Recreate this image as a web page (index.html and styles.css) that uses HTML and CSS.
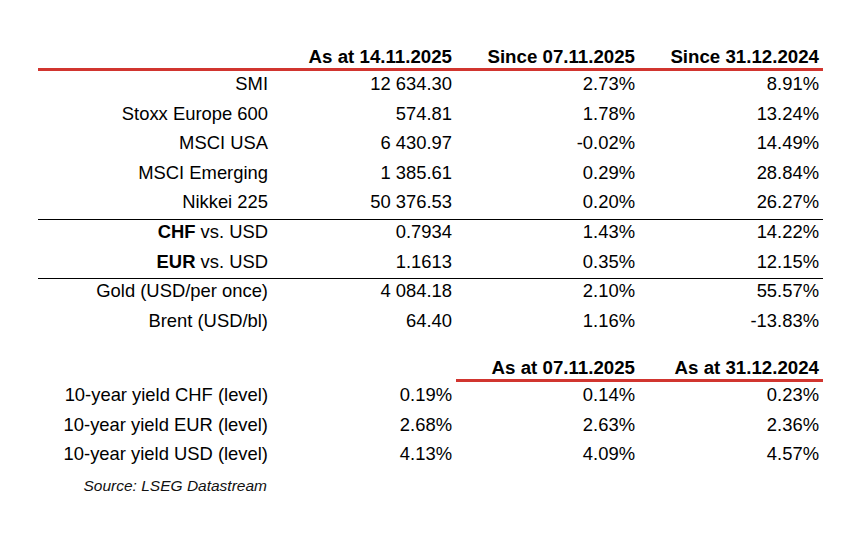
FILE: index.html
```html
<!DOCTYPE html>
<html lang="en">
<head>
<meta charset="utf-8">
<title>Market overview</title>
<link rel="stylesheet" href="styles.css">
</head>
<body>
<main class="sheet">
  <div class="row head">
    <div class="cell"></div>
    <div class="cell">As at 14.11.2025</div>
    <div class="cell">Since 07.11.2025</div>
    <div class="cell">Since 31.12.2024</div>
  </div>
  <div class="row">
    <div class="cell">SMI</div>
    <div class="cell">12 634.30</div>
    <div class="cell">2.73%</div>
    <div class="cell">8.91%</div>
  </div>
  <div class="row">
    <div class="cell">Stoxx Europe 600</div>
    <div class="cell">574.81</div>
    <div class="cell">1.78%</div>
    <div class="cell">13.24%</div>
  </div>
  <div class="row">
    <div class="cell">MSCI USA</div>
    <div class="cell">6 430.97</div>
    <div class="cell">-0.02%</div>
    <div class="cell">14.49%</div>
  </div>
  <div class="row">
    <div class="cell">MSCI Emerging</div>
    <div class="cell">1 385.61</div>
    <div class="cell">0.29%</div>
    <div class="cell">28.84%</div>
  </div>
  <div class="row">
    <div class="cell">Nikkei 225</div>
    <div class="cell">50 376.53</div>
    <div class="cell">0.20%</div>
    <div class="cell">26.27%</div>
  </div>
  <div class="row ruled">
    <div class="cell"><b>CHF</b> vs. USD</div>
    <div class="cell">0.7934</div>
    <div class="cell">1.43%</div>
    <div class="cell">14.22%</div>
  </div>
  <div class="row">
    <div class="cell"><b>EUR</b> vs. USD</div>
    <div class="cell">1.1613</div>
    <div class="cell">0.35%</div>
    <div class="cell">12.15%</div>
  </div>
  <div class="row ruled">
    <div class="cell">Gold (USD/per once)</div>
    <div class="cell">4 084.18</div>
    <div class="cell">2.10%</div>
    <div class="cell">55.57%</div>
  </div>
  <div class="row">
    <div class="cell">Brent (USD/bl)</div>
    <div class="cell">64.40</div>
    <div class="cell">1.16%</div>
    <div class="cell">-13.83%</div>
  </div>

  <div class="row head partial">
    <div class="cell"></div>
    <div class="cell"></div>
    <div class="cell red">As at 07.11.2025</div>
    <div class="cell red">As at 31.12.2024</div>
  </div>
  <div class="row">
    <div class="cell">10-year yield CHF (level)</div>
    <div class="cell">0.19%</div>
    <div class="cell">0.14%</div>
    <div class="cell">0.23%</div>
  </div>
  <div class="row">
    <div class="cell">10-year yield EUR (level)</div>
    <div class="cell">2.68%</div>
    <div class="cell">2.63%</div>
    <div class="cell">2.36%</div>
  </div>
  <div class="row">
    <div class="cell">10-year yield USD (level)</div>
    <div class="cell">4.13%</div>
    <div class="cell">4.09%</div>
    <div class="cell">4.57%</div>
  </div>
  <div class="row source">
    <div class="cell">Source: LSEG Datastream</div>
  </div>
</main>
</body>
</html>
```

FILE: styles.css
```css
html, body {
  margin: 0;
  padding: 0;
  background: #ffffff;
}

body {
  font-family: "Liberation Sans", Arial, sans-serif;
  font-size: 18.4px;
  color: #000000;
}

.sheet {
  width: 785px;
  margin-left: 38px;
  padding-top: 40px;
}

.row {
  display: grid;
  grid-template-columns: 234px 184px 183px 184px;
  height: 29.6px;
  box-sizing: border-box;
  padding-bottom: 4px;
  line-height: 25.6px;
}

.cell {
  text-align: right;
  padding-right: 4px;
  white-space: nowrap;
}

.cell b {
  font-weight: 700;
}

.ruled {
  border-top: 1px solid #000000;
  line-height: 24.6px;
}

.head {
  height: 31px;
  padding-top: 5px;
  padding-bottom: 0;
  line-height: 23px;
  font-size: 18.7px;
  font-weight: 700;
  border-bottom: 3px solid #d1352f;
}

.head.partial {
  border-bottom: none;
  margin-top: 13.6px;
}

.head.partial .cell {
  height: 26px;
  box-sizing: border-box;
}

.head.partial .red {
  border-bottom: 3px solid #d1352f;
}

.source {
  height: 30px;
  padding-bottom: 0;
  line-height: 30px;
  font-size: 15.5px;
  font-style: italic;
  color: #111111;
}

.source .cell {
  padding-right: 5px;
}
```
